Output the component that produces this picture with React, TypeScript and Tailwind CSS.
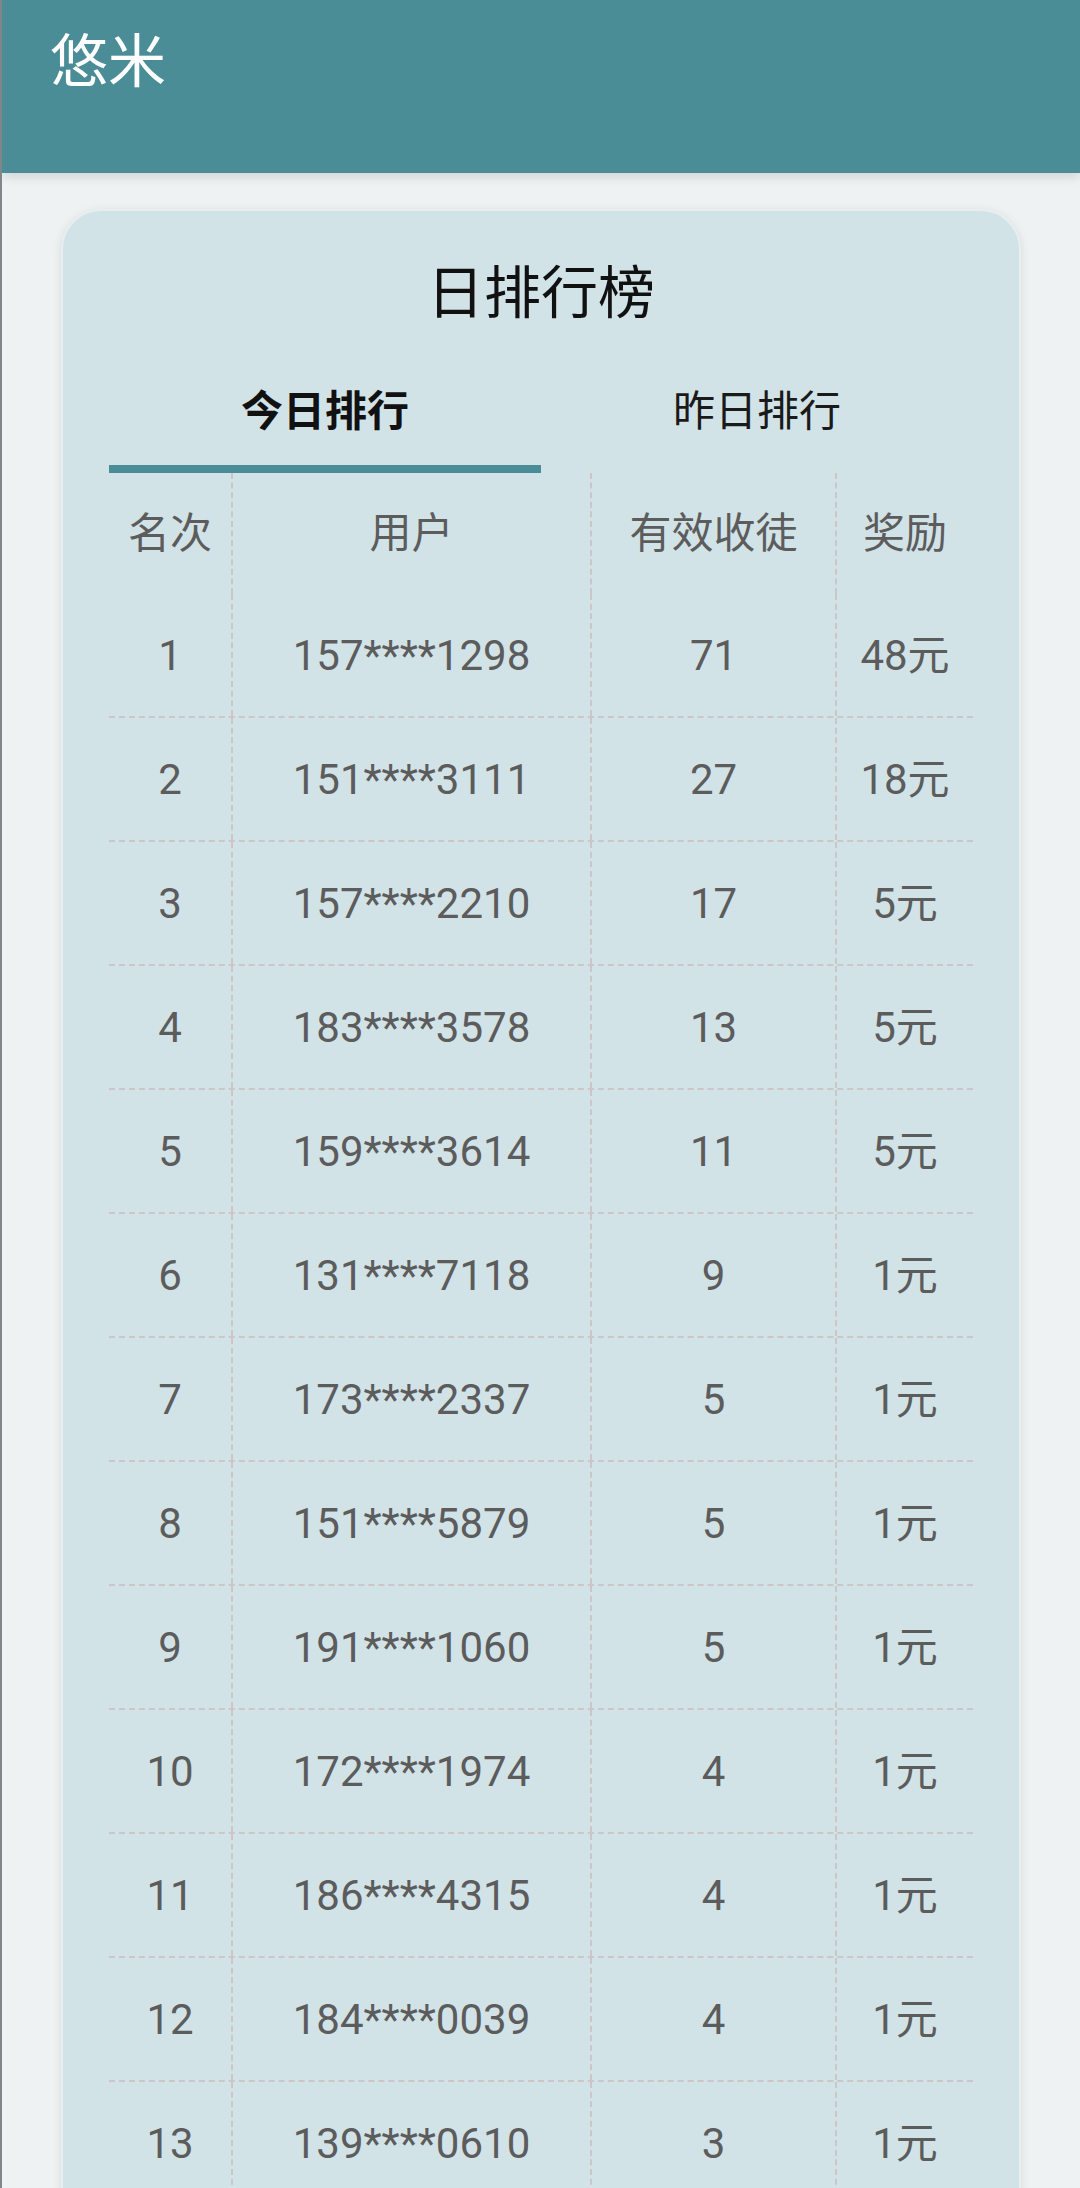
import React, { useState } from "react";

type Row = { rank: number; user: string; count: number; reward: string };

const rows: Row[] = [
  { rank: 1, user: "157****1298", count: 71, reward: "48元" },
  { rank: 2, user: "151****3111", count: 27, reward: "18元" },
  { rank: 3, user: "157****2210", count: 17, reward: "5元" },
  { rank: 4, user: "183****3578", count: 13, reward: "5元" },
  { rank: 5, user: "159****3614", count: 11, reward: "5元" },
  { rank: 6, user: "131****7118", count: 9, reward: "1元" },
  { rank: 7, user: "173****2337", count: 5, reward: "1元" },
  { rank: 8, user: "151****5879", count: 5, reward: "1元" },
  { rank: 9, user: "191****1060", count: 5, reward: "1元" },
  { rank: 10, user: "172****1974", count: 4, reward: "1元" },
  { rank: 11, user: "186****4315", count: 4, reward: "1元" },
  { rank: 12, user: "184****0039", count: 4, reward: "1元" },
  { rank: 13, user: "139****0610", count: 3, reward: "1元" },
];

const font = { fontFamily: 'Roboto, "Noto Sans CJK SC", sans-serif' };

const TableRow = ({ cells, head }: { cells: React.ReactNode[]; head?: boolean }) => (
  <div
    className={
      head
        ? "flex h-[121px]"
        : "flex h-[124px] border-b-2 border-dashed border-[#cdc5c8]"
    }
  >
    <div className="flex w-[122px] items-center justify-center">{cells[0]}</div>
    <div className="flex w-[359px] items-center justify-center border-l-2 border-dashed border-[#cdc5c8]">
      {cells[1]}
    </div>
    <div className="flex w-[245px] items-center justify-center border-l-2 border-dashed border-[#cdc5c8]">
      {cells[2]}
    </div>
    <div className="flex flex-1 items-center justify-center border-l-2 border-dashed border-[#cdc5c8]">
      {cells[3]}
    </div>
  </div>
);

export default function App() {
  const [tab, setTab] = useState(0);

  return (
    <div className="min-h-screen overflow-hidden bg-[#eef2f3] border-l-2 border-[#7f8789]" style={font}>
      <header className="relative z-10 h-[173px] bg-[#4a8d96] pl-[48px] pt-[33px] shadow-[0_4px_10px_rgba(0,0,0,0.12)]">
        <h1 className="text-[58px] leading-none text-white">悠米</h1>
      </header>

      <main className="px-[59px] pt-[36px]">
        <div className="rounded-[40px] border-2 border-[#e8eef0] bg-[#d2e3e8] px-[46px] pt-[48px] pb-10 shadow-[0_2px_10px_rgba(0,0,0,0.10)]">
          <h2 className="text-center text-[57px] leading-[70px] text-[#111]">日排行榜</h2>

          <div className="mt-[28px] flex">
            {["今日排行", "昨日排行"].map((label, i) => (
              <button
                key={label}
                onClick={() => setTab(i)}
                className="flex flex-1 flex-col items-stretch"
              >
                <span
                  className={
                    tab === i
                      ? "flex h-[108px] items-center justify-center text-[42px] font-bold text-[#111]"
                      : "flex h-[108px] items-center justify-center text-[42px] text-[#1a1a1a]"
                  }
                >
                  {label}
                </span>
                <span className={tab === i ? "h-[8px] bg-[#4a8d96]" : "h-[8px]"} />
              </button>
            ))}
          </div>

          <div className="text-[42px] text-[#5c5c5c]">
            <TableRow head cells={["名次", "用户", "有效收徒", "奖励"]} />
            {rows.map((r) => (
              <TableRow key={r.rank} cells={[r.rank, r.user, r.count, r.reward]} />
            ))}
          </div>
        </div>
      </main>
    </div>
  );
}
